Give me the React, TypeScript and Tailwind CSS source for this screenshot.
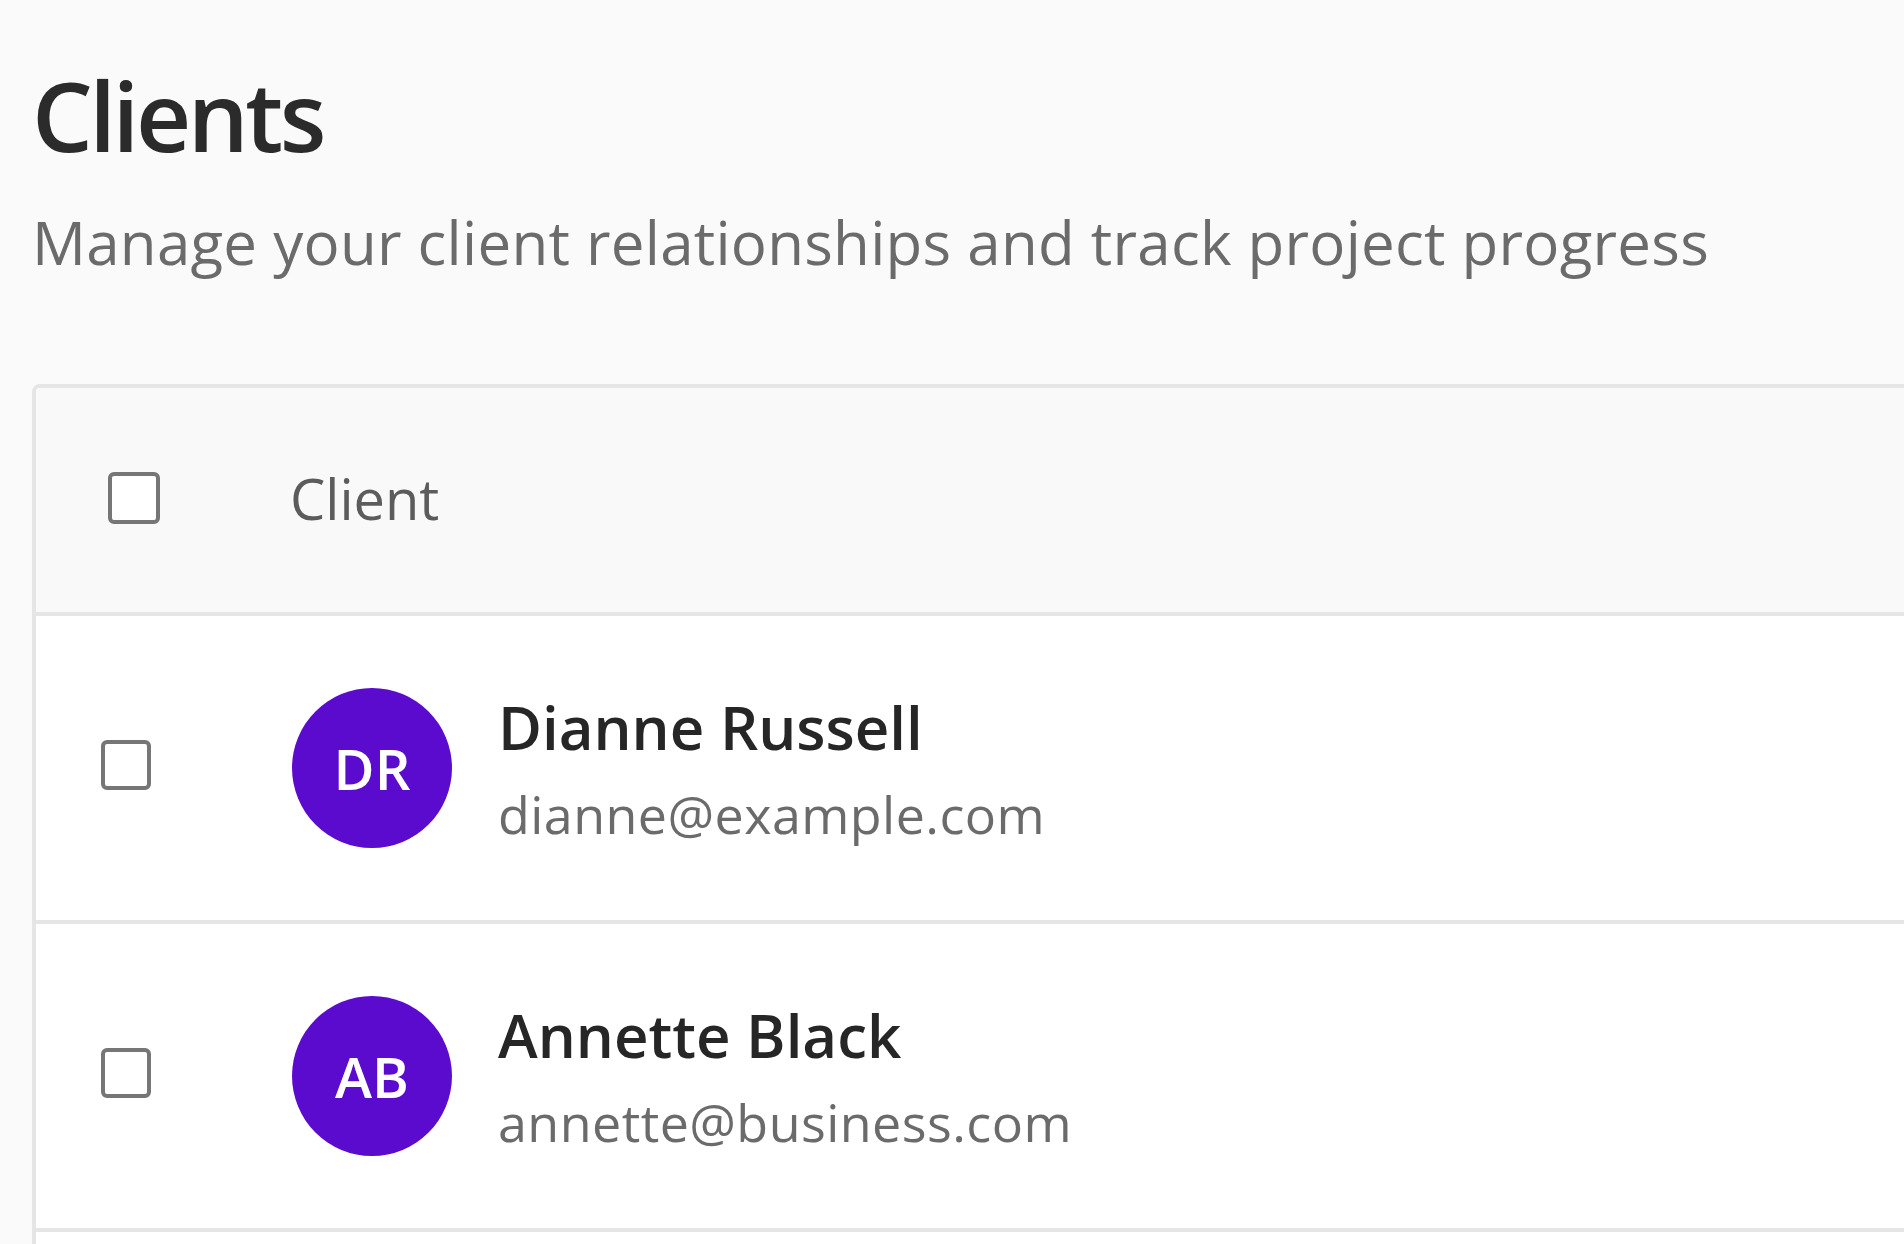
import React from "react";

type Client = { initials: string; name: string; email: string };

const clients: Client[] = [
  { initials: "DR", name: "Dianne Russell", email: "dianne@example.com" },
  { initials: "AB", name: "Annette Black", email: "annette@business.com" },
];

function Box({ size }: { size: "lg" | "md" }) {
  return (
    <input
      type="checkbox"
      className={
        size === "lg"
          ? "appearance-none block w-[52px] h-[52px] border-[4px] border-[#767676] rounded-[6px] bg-white shrink-0"
          : "appearance-none block w-[50px] h-[50px] border-[4px] border-[#767676] rounded-[6px] bg-white shrink-0 mb-[6px]"
      }
    />
  );
}

export default function App() {
  return (
    <div
      className="w-full h-screen overflow-hidden bg-[#fafafa]"
      style={{ fontFamily: '"Open Sans", "Noto Sans", sans-serif' }}
    >
      <div className="pl-[32px] pt-[67px]">
        <h1 className="text-[96px] leading-[96px] font-semibold tracking-[-3.5px] text-[#2b2b2b]">Clients</h1>
        <p className="mt-[49px] text-[60px] leading-[60px] tracking-[0.27px] text-[#6b6b6b]">
          Manage your client relationships and track project progress
        </p>
        <div className="mt-[112px] w-[1960px] border-[4px] border-[#e5e5e5] rounded-[8px] bg-white overflow-hidden">
          <div className="h-[228px] pb-[4px] bg-[#f9f9f9] flex items-center pl-[72px] border-b-[4px] border-[#e5e5e5]">
            <Box size="lg" />
            <span className="ml-[130px] text-[56px] leading-[56px] font-medium text-[#5c5c5c]">Client</span>
          </div>
          {clients.map((c) => (
            <div
              key={c.email}
              className="h-[308px] flex items-center pl-[65px] border-b-[4px] border-[#e5e5e5]"
            >
              <Box size="md" />
              <div className="ml-[141px] w-[160px] h-[160px] rounded-full bg-[#5a0bce] flex items-center justify-center shrink-0">
                <span className="text-white text-[56px] leading-[56px] font-semibold">{c.initials}</span>
              </div>
              <div className="ml-[46px] flex flex-col pt-[5px]">
                <span className="text-[60px] leading-[76px] font-semibold text-[#262626]">{c.name}</span>
                <span className="mt-[11px] text-[52px] leading-[76px] tracking-[0.45px] text-[#6b6b6b]">{c.email}</span>
              </div>
            </div>
          ))}
          <div className="h-[308px] bg-white" />
        </div>
      </div>
    </div>
  );
}
